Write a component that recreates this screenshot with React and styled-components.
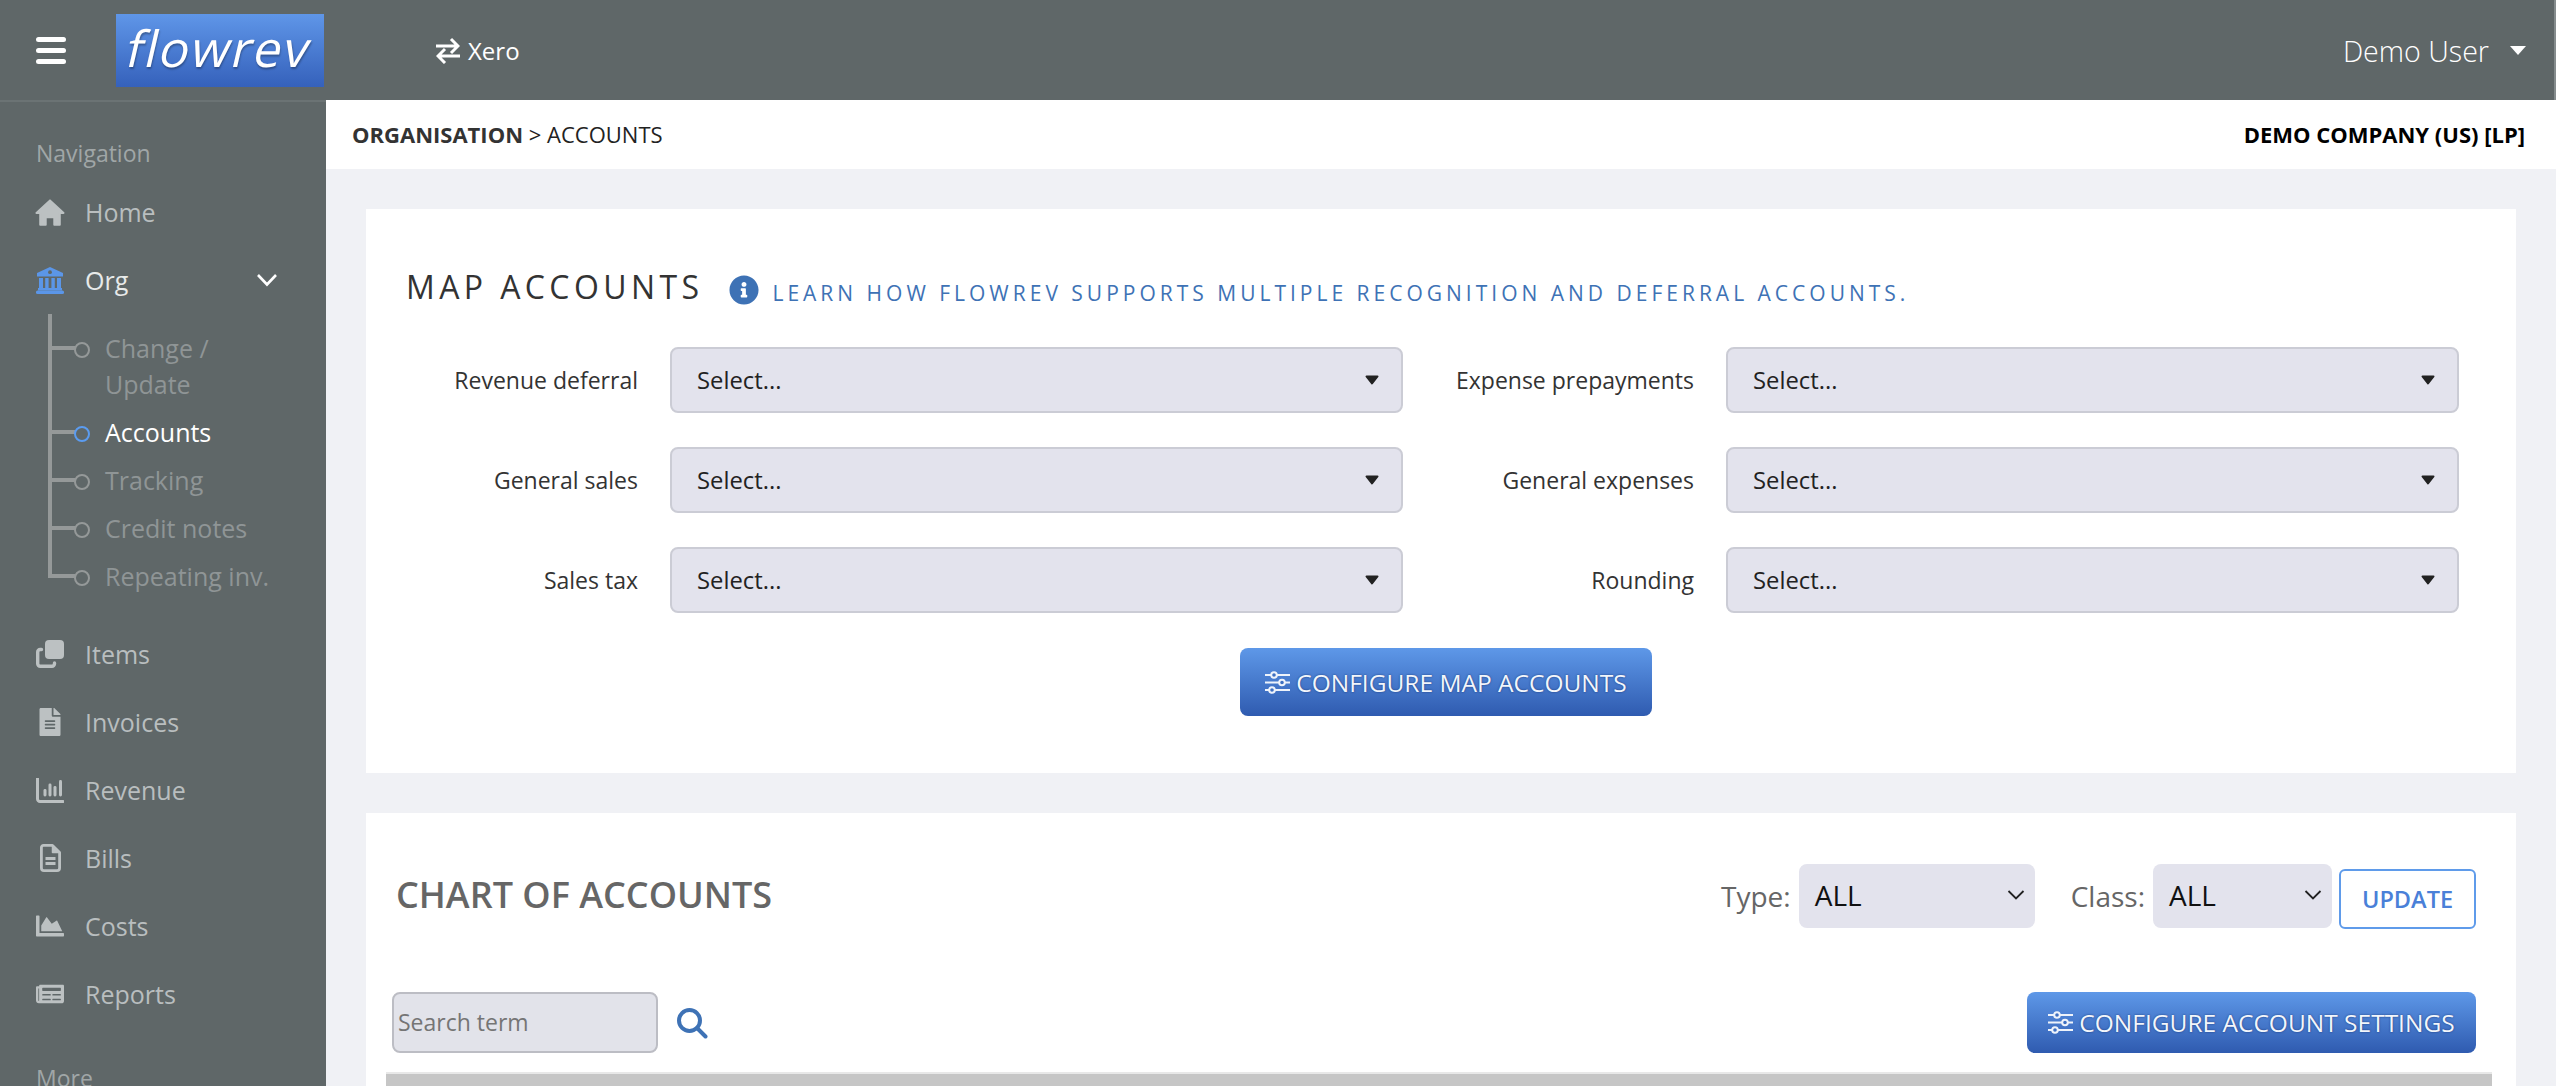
import React from "react";
import styled, { createGlobalStyle } from "styled-components";
import { FaFileAlt, FaChartArea, FaNewspaper, FaInfoCircle } from "react-icons/fa";

const Global = createGlobalStyle`
  html, body { margin: 0; padding: 0; height: 100%; overflow: hidden; }
  body { font-family: "Open Sans", "Liberation Sans", sans-serif; background: #f0f1f5; }
  * { box-sizing: border-box; }
`;

const Page = styled.div`
  display: flex; flex-direction: column; height: 100vh; overflow: hidden;
`;
const TopBar = styled.header`
  flex: 0 0 100px; display: flex; align-items: center; background: #5f6768;
  border-right: 2px solid #858c8d; padding-right: 28px;
`;
const MenuBtn = styled.div`
  width: 30px; height: 27px; margin-left: 36px; display: flex; flex-direction: column; justify-content: space-between;
  span { display: block; height: 5px; border-radius: 3px; background: #fff; }
`;
const Logo = styled.div`
  width: 208px; height: 73px; margin-left: 50px; display: flex; align-items: center; justify-content: center;
  background: linear-gradient(#5f96e8, #3561bb);
`;
const Wordmark = styled.span`
  display: block; transform: skewX(-13deg); color: #fff; font-size: 50px; font-weight: 400; letter-spacing: 1.7px;
  text-shadow: 1px 2px 2px rgba(0,0,0,.3); line-height: 1; position: relative; top: -2px;
`;
const Integration = styled.div`
  margin-left: 112px; display: flex; align-items: center; gap: 8px; color: #fff; font-size: 24px; font-weight: 400;
`;
const UserMenu = styled.div`
  margin-left: auto; display: flex; align-items: center; gap: 21px; color: #fff; font-size: 28.6px; font-weight: 300;
`;
const Body = styled.div`
  flex: 1; display: flex; min-height: 0;
`;
const Side = styled.aside`
  flex: 0 0 326px; background: #5f6768; border-top: 2px solid #6b7374; overflow: hidden;
`;
const SectionLabel = styled.div`
  padding: ${p => p.$top}px 0 8px 36px; height: ${p => p.$top + 42}px; line-height: 34px;
  color: #a0a6a7; font-size: 23px;
`;
const NavItem = styled.div`
  height: 68px; display: flex; align-items: center; padding-left: 35px; gap: 20px;
  color: ${p => (p.$active ? "#e8eaea" : "#b9bebf")}; font-size: 25px; font-weight: 400;
`;
const NavIcon = styled.span`
  width: 30px; display: flex; justify-content: center; color: ${p => (p.$active ? "#5b96e8" : "#bcc1c2")};
  font-size: 28px;
`;
const Chevron = styled.svg`
  margin-left: auto; margin-right: 48px; width: 22px; height: 14px;
`;
const SubList = styled.div`
  position: relative; padding: 10px 0 20px;
  &::before { content: ""; position: absolute; left: 48px; top: 0; bottom: 42px; width: 4px; background: #959999; }
`;
const SubItem = styled.div`
  position: relative; padding: 6px 40px 6px 105px; line-height: 36px; font-size: 25px;
  color: ${p => (p.$active ? "#fff" : "#8f9596")};
  &::before { content: ""; position: absolute; left: 52px; top: 22px; width: 23px; height: 4px; background: #959999; }
  &::after { content: ""; position: absolute; left: 74px; top: 18px; width: 12px; height: 12px; border-radius: 50%;
    border: 2px solid ${p => (p.$active ? "#5b9cf0" : "#959999")}; background: #5f6768; }
`;
const Main = styled.main`
  flex: 1; min-width: 0; display: flex; flex-direction: column; overflow: hidden; background: #f0f1f5;
`;
const Crumbs = styled.div`
  flex: 0 0 69px; background: #fff; display: flex; align-items: center; justify-content: space-between;
  padding: 0 31px 2px 26px; font-size: 22px; color: #222;
  b { font-weight: 700; color: #333; }
`;
const Company = styled.div`
  font-weight: 700; color: #000; font-size: 22px;
`;
const Card = styled.section`
  background: #fff; margin: 40px 40px 0; flex: 0 0 auto;
`;
const MapCard = styled(Card)`
  height: 564px; padding: 56px 0 0 41px;
`;
const ChartCard = styled(Card)`
  flex: 1; padding: 51px 40px 0 26px; overflow: hidden; min-height: 400px;
`;
const MapHead = styled.div`
  height: 44px; display: flex; align-items: center; margin-bottom: 38px;
`;
const MapTitle = styled.h2`
  margin: 0 0 0 -1px; font-size: 32px; font-weight: 400; letter-spacing: 4.4px; color: #333; line-height: 44px;
`;
const InfoIcon = styled(FaInfoCircle)`
  margin-left: 26px; color: #3e72b5; font-size: 30px; flex: none; position: relative; top: 3px;
`;
const LearnLink = styled.a`
  margin-left: 13px; color: #3e72b5; font-size: 21px; font-weight: 400; letter-spacing: 4px; position: relative; top: 6px;
`;
const FieldGrid = styled.div`
  display: grid; grid-template-columns: 231px 733px 259px 733px; column-gap: 32px; row-gap: 34px; align-items: center;
`;
const FieldLabel = styled.label`
  text-align: right; font-size: 23px; color: #333;
`;
const SelectBox = styled.div`
  height: 66px; display: flex; align-items: center; justify-content: space-between; padding: 0 22px 0 25px;
  background: #e3e3ed; border: 2px solid #cbccd5; border-radius: 8px; font-size: 23.8px; color: #222; font-weight: 500;
`;
const MapFooter = styled.div`
  display: flex; justify-content: center; margin: 35px 0 0 -31px;
`;
const ActionBtn = styled.button`
  height: ${p => p.$h}px; width: ${p => p.$w}px; display: flex; align-items: center; justify-content: center; gap: 6px;
  background: linear-gradient(#5e98e8, #2f5bb0); border: 0; border-radius: 8px; padding: 0;
  margin-left: ${p => (p.$push ? "auto" : "0")};
  color: #f2f6fc; font: 400 24.5px "Open Sans", sans-serif; text-shadow: 0 0 2px rgba(15,40,100,.8);
`;
const ChartHead = styled.div`
  display: flex; align-items: flex-start; height: 65px; padding-left: 4px;
`;
const ChartTitle = styled.h2`
  margin: 0; font-size: 36px; font-weight: 600; color: #666; line-height: 62px;
`;
const Filters = styled.div`
  margin-left: auto; display: flex; align-items: center; height: 64px;
`;
const FilterLabel = styled.span`
  font-size: 28px; color: #666; margin: 0 8px 0 ${p => p.$ml}px;
`;
const FilterSelect = styled.div`
  width: ${p => p.$w}px; height: 64px; background: #e3e3ed; border-radius: 8px; display: flex; align-items: center;
  justify-content: space-between; padding: 0 10px 2px 16px; font-size: 28px; color: #111;
`;
const UpdateBtn = styled.button`
  margin: 5px 0 0 7px; width: 137px; height: 60px; background: #fff; border: 2px solid #5f9bea; border-radius: 6px;
  color: #4a80d8; font: 600 23.5px "Open Sans", sans-serif; padding: 0;
`;
const SearchRow = styled.div`
  display: flex; align-items: center; margin-top: 63px; height: 61px;
`;
const SearchBox = styled.input`
  width: 266px; height: 61px; background: #e2e3ea; border: 2px solid #bcbdc4; border-radius: 8px; padding: 0 4px 2px;
  font: 400 23px "Open Sans", sans-serif; color: #333;
  &::placeholder { color: #757575; opacity: 1; }
`;
const SearchIcon = styled.svg`
  width: 32px; height: 32px; margin-left: 18px;
`;
const TableHead = styled.div`
  height: 30px; margin: 19px -16px 0 -6px; background: #c6c6c6; border-top: 2px solid #e8e8e8;
`;

const Sliders = () => (
  <svg width="25" height="23" viewBox="0 0 25 23" fill="none" stroke="#eef3fb" strokeWidth="2">
    <path d="M0 4H25M0 11.5H25M0 19H25" />
    <circle cx="9" cy="4" r="2.8" fill="#3d6fc2" />
    <circle cx="17" cy="11.5" r="2.8" fill="#3d6fc2" />
    <circle cx="7" cy="19" r="2.8" fill="#3d6fc2" />
  </svg>
);
const Arrow = () => (
  <svg width="14" height="10" viewBox="0 0 14 10"><path d="M1.5 1.5H12.5L7 8.5Z" fill="#222" stroke="#222" strokeWidth="2" strokeLinejoin="round" /></svg>
);
const Down = () => (
  <svg width="18" height="10" viewBox="0 0 18 10" fill="none" stroke="#222" strokeWidth="1.8"><path d="M1.5 1L9 8.5L16.5 1" /></svg>
);
const HomeIcon = () => (
  <svg width="32" height="29" viewBox="0 0 32 29" fill="currentColor" stroke="currentColor" strokeWidth="2" strokeLinejoin="round">
    <path d="M16 1.5L30.5 15H26.5V27.5H20.5V19.5H11.5V27.5H5.5V15H1.5Z" />
  </svg>
);
const BankIcon = () => (
  <svg width="28" height="27" viewBox="0 0 28 27" fill="currentColor">
    <path d="M14 0L27 6V9.5H1V6Z" />
    <circle cx="14" cy="5.2" r="1.9" fill="#5f6768" />
    <rect x="3" y="11" width="4" height="10.5" /><rect x="9.2" y="11" width="3.4" height="10.5" />
    <rect x="15.4" y="11" width="3.4" height="10.5" /><rect x="21" y="11" width="4" height="10.5" />
    <rect x="2" y="21" width="24" height="2.5" /><rect x="0" y="23.5" width="28" height="3.5" rx="1.5" />
  </svg>
);
const CloneIcon = () => (
  <svg width="28" height="28" viewBox="0 0 28 28" fill="none" stroke="currentColor" strokeWidth="3.4" strokeLinecap="round">
    <rect x="9" y="0" width="19" height="19" rx="4" fill="currentColor" stroke="none" />
    <path d="M5.5 9.5H4.2A2.5 2.5 0 0 0 1.7 12V23.8A2.5 2.5 0 0 0 4.2 26.3H16A2.5 2.5 0 0 0 18.5 23.8V23" />
  </svg>
);
const RevenueIcon = () => (
  <svg width="28" height="25" viewBox="0 0 28 25" fill="currentColor">
    <path d="M1.5 0V21A2.5 2.5 0 0 0 4 23.5H27" fill="none" stroke="currentColor" strokeWidth="3" strokeLinecap="round" />
    <rect x="7.5" y="11" width="3" height="7.5" rx="1.4" /><rect x="12.5" y="5.5" width="3" height="13" rx="1.4" />
    <rect x="17.5" y="8" width="3" height="10.5" rx="1.4" /><rect x="23" y="2" width="3" height="16.5" rx="1.4" />
  </svg>
);
const BillIcon = () => (
  <svg width="21" height="28" viewBox="0 0 21 28" fill="none" stroke="currentColor" strokeWidth="2.8" strokeLinejoin="round">
    <path d="M3.5 1.4H12.5L19.6 8.5V24A2.6 2.6 0 0 1 17 26.6H4A2.6 2.6 0 0 1 1.4 24V3.5A2.1 2.1 0 0 1 3.5 1.4Z" />
    <path d="M12.5 1.4V8.5H19.6" fill="currentColor" strokeWidth="1.5" />
    <path d="M5.5 14.5H15.5M5.5 19.5H15.5" />
  </svg>
);

const nav = [
  [<CloneIcon />, "Items"], [<FaFileAlt />, "Invoices"], [<RevenueIcon />, "Revenue"],
  [<BillIcon />, "Bills"], [<FaChartArea />, "Costs"], [<FaNewspaper />, "Reports"],
];
const fields = [
  ["Revenue deferral", "Expense prepayments"],
  ["General sales", "General expenses"],
  ["Sales tax", "Rounding"],
];

export default function App() {
  return (
    <Page>
      <Global />
      <TopBar>
        <MenuBtn><span /><span /><span /></MenuBtn>
        <Logo><Wordmark>flowrev</Wordmark></Logo>
        <Integration>
          <svg width="24" height="27" viewBox="0 0 24 27" fill="none" stroke="#fff" strokeWidth="3">
            <path d="M0 9H21M15 2L22 9L15 16" />
            <path d="M24 19H3M9 12L2 19L9 26" />
          </svg>
          Xero
        </Integration>
        <UserMenu>
          Demo User
          <svg width="16" height="9" viewBox="0 0 16 9"><path d="M0 0H16L8 9Z" fill="#fff" /></svg>
        </UserMenu>
      </TopBar>
      <Body>
        <Side>
          <SectionLabel $top={34}>Navigation</SectionLabel>
          <NavItem><NavIcon><HomeIcon /></NavIcon>Home</NavItem>
          <NavItem $active>
            <NavIcon $active><BankIcon /></NavIcon>Org
            <Chevron viewBox="0 0 22 14" fill="none" stroke="#fff" strokeWidth="2.6"><path d="M2 2L11 11.5L20 2" /></Chevron>
          </NavItem>
          <SubList>
            <SubItem>Change /<br />Update</SubItem>
            <SubItem $active>Accounts</SubItem>
            <SubItem>Tracking</SubItem>
            <SubItem>Credit notes</SubItem>
            <SubItem>Repeating inv.</SubItem>
          </SubList>
          {nav.map(([icon, label]) => (
            <NavItem key={label}><NavIcon>{icon}</NavIcon>{label}</NavItem>
          ))}
          <SectionLabel $top={33}>More</SectionLabel>
        </Side>
        <Main>
          <Crumbs>
            <span><b>ORGANISATION</b> &gt; ACCOUNTS</span>
            <Company>DEMO COMPANY (US) [LP]</Company>
          </Crumbs>
          <MapCard>
            <MapHead>
              <MapTitle>MAP ACCOUNTS</MapTitle>
              <InfoIcon />
              <LearnLink>LEARN HOW FLOWREV SUPPORTS MULTIPLE RECOGNITION AND DEFERRAL ACCOUNTS.</LearnLink>
            </MapHead>
            <FieldGrid>
              {fields.flat().map(label => (
                <React.Fragment key={label}>
                  <FieldLabel>{label}</FieldLabel>
                  <SelectBox>Select...<Arrow /></SelectBox>
                </React.Fragment>
              ))}
            </FieldGrid>
            <MapFooter>
              <ActionBtn $w={412} $h={68}><Sliders />CONFIGURE MAP ACCOUNTS</ActionBtn>
            </MapFooter>
          </MapCard>
          <ChartCard>
            <ChartHead>
              <ChartTitle>CHART OF ACCOUNTS</ChartTitle>
              <Filters>
                <FilterLabel $ml={0}>Type:</FilterLabel>
                <FilterSelect $w={236}>ALL<Down /></FilterSelect>
                <FilterLabel $ml={36}>Class:</FilterLabel>
                <FilterSelect $w={179}>ALL<Down /></FilterSelect>
                <UpdateBtn>UPDATE</UpdateBtn>
              </Filters>
            </ChartHead>
            <SearchRow>
              <SearchBox placeholder="Search term" />
              <SearchIcon viewBox="0 0 32 32" fill="none" stroke="#3e72b5" strokeWidth="4">
                <circle cx="13.5" cy="13.5" r="10.5" />
                <path d="M21 21L29.5 29.5" strokeLinecap="round" />
              </SearchIcon>
              <ActionBtn $push $w={449} $h={61}><Sliders />CONFIGURE ACCOUNT SETTINGS</ActionBtn>
            </SearchRow>
            <TableHead />
          </ChartCard>
        </Main>
      </Body>
    </Page>
  );
}
